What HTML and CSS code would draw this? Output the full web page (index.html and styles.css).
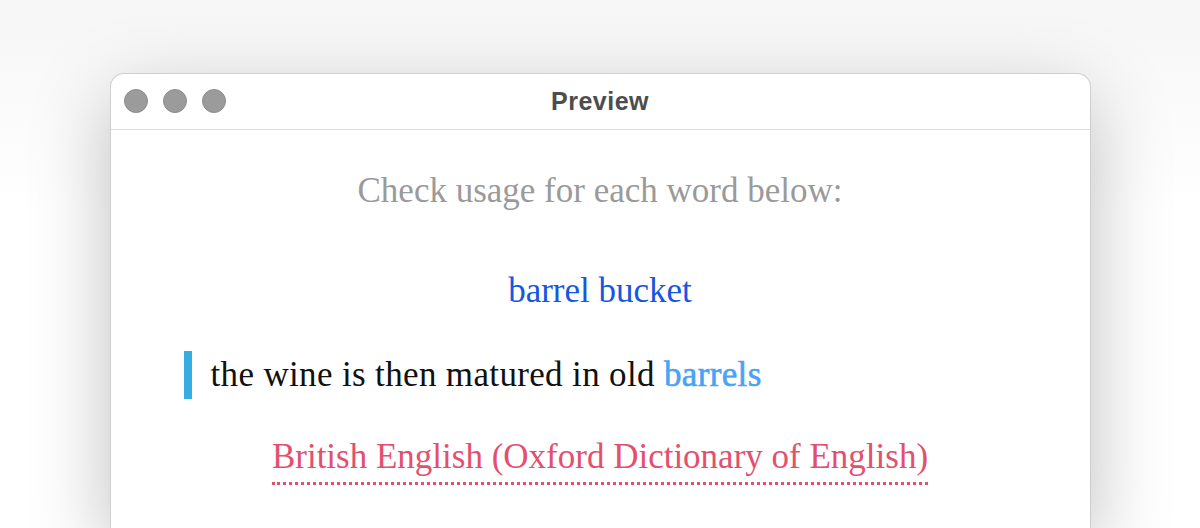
FILE: index.html
```html
<!DOCTYPE html>
<html>

<head>
  <meta charset="utf-8">
  <title>Preview</title>
  <link rel="stylesheet" href="styles.css">
</head>

<body>
  <div class="window">
    <div class="titlebar">
      <div class="lights">
        <span class="light"></span>
        <span class="light"></span>
        <span class="light"></span>
      </div>
      <div class="title">Preview</div>
    </div>
    <div class="content">
      <p class="prompt">Check usage for each word below:</p>
      <p class="words">barrel bucket</p>
      <blockquote class="example">the wine is then matured in old <span class="hit">barrels</span></blockquote>
      <p class="source">British English (Oxford Dictionary of English)</p>
    </div>
  </div>
</body>

</html>
```

FILE: styles.css
```css
* {
  margin: 0;
  padding: 0;
  box-sizing: border-box;
}

body {
  width: 1200px;
  height: 528px;
  overflow: hidden;
  background: linear-gradient(#f6f6f6, #ffffff 40%);
  font-family: "Liberation Serif", "Times New Roman", serif;
}

.window {
  width: 981px;
  height: 455px;
  margin: 73px auto 0;
  background: #fff;
  border: 1px solid #cfcfcf;
  border-bottom: none;
  border-radius: 14px 14px 0 0;
  box-shadow: 0 24px 80px rgba(0, 0, 0, 0.26);
  overflow: hidden;
}

.titlebar {
  position: relative;
  height: 56px;
  border-bottom: 1px solid #dcdcdc;
  display: flex;
  align-items: center;
  justify-content: center;
}

.lights {
  position: absolute;
  left: 13px;
  top: 15px;
  display: flex;
  gap: 15px;
}

.light {
  width: 24px;
  height: 24px;
  border-radius: 50%;
  background: #9b9b9b;
  border: 1px solid #8c8c8c;
}

.title {
  font-family: "Liberation Sans", Arial, sans-serif;
  font-weight: bold;
  font-size: 25px;
  letter-spacing: 0.5px;
  color: #4d4d4d;
}

.content {
  display: flex;
  flex-direction: column;
  align-items: center;
  padding-top: 41px;
  font-size: 35px;
}

.prompt {
  color: #9a9a9a;
  line-height: 40px;
}

.words {
  margin-top: 60px;
  color: #1656e0;
  line-height: 40px;
}

.example {
  align-self: flex-start;
  margin: 40px 0 0 73px;
  padding-left: 19px;
  border-left: 8px solid #36ade0;
  line-height: 48px;
  letter-spacing: 0.35px;
  color: #111;
}

.hit {
  color: #4aa2f4;
  -webkit-text-stroke: 0.6px #4aa2f4;
}

.source {
  margin-top: 38px;
  line-height: 40px;
  color: #e2506e;
  border-bottom: 3px dotted #e2506e;
  padding-bottom: 5px;
}
```
